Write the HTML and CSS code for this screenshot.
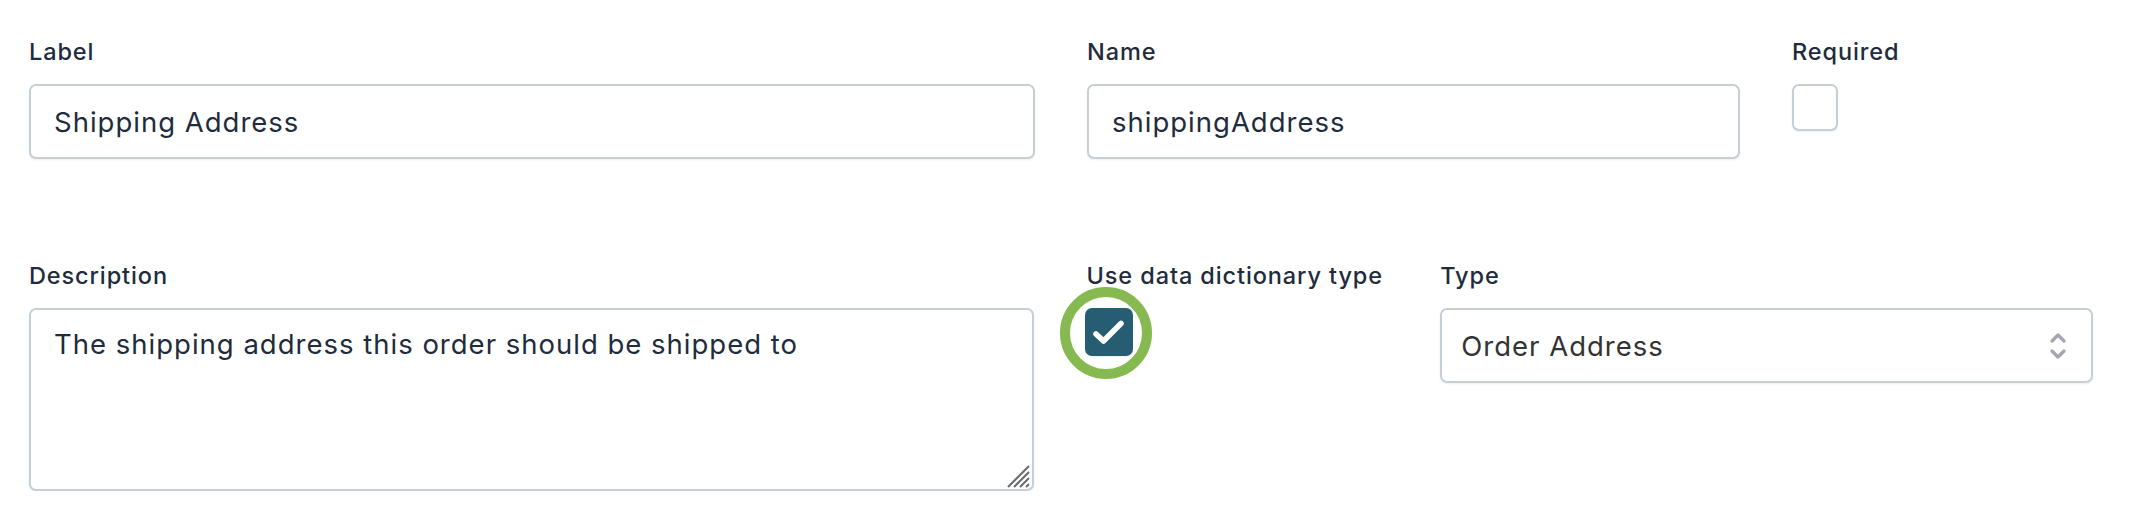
FILE: index.html
```html
<!DOCTYPE html>
<html lang="en">
<head>
<meta charset="utf-8">
<title>Field editor</title>
<link rel="stylesheet" href="styles.css">
</head>
<body>
<form class="form">
  <div class="row">
    <div class="field col-wide">
      <label class="lbl">Label</label>
      <input class="control" type="text" value="Shipping Address">
    </div>
    <div class="field col-mid">
      <label class="lbl">Name</label>
      <input class="control" type="text" value="shippingAddress">
    </div>
    <div class="field col-check">
      <label class="lbl">Required</label>
      <span class="check"></span>
    </div>
  </div>
  <div class="row">
    <div class="field col-wide">
      <label class="lbl">Description</label>
      <div class="ta-wrap">
        <textarea class="control area">The shipping address this order should be shipped to</textarea>
        <svg class="grip" width="24" height="24" viewBox="0 0 24 24">
          <path d="M2 23 L23 2 M8 23 L23 8 M14 23 L23 14 M20 23 L23 20" stroke="#6b6b6b" stroke-width="2" fill="none"/>
        </svg>
      </div>
    </div>
    <div class="field col-dict">
      <label class="lbl">Use data dictionary type</label>
      <div class="check-wrap">
        <span class="check checked">
          <svg width="48" height="48" viewBox="0 0 48 48">
            <path d="M11 26 L18.5 33 L36 15.5" stroke="#fff" stroke-width="5.5" fill="none" stroke-linecap="round" stroke-linejoin="round"/>
          </svg>
        </span>
        <span class="ring"></span>
      </div>
    </div>
    <div class="field col-mid">
      <label class="lbl">Type</label>
      <div class="select">
        <span class="select-value">Order Address</span>
        <svg class="chev" width="18" height="30" viewBox="0 0 18 30">
          <path d="M3 10 L9 4 L15 10 M3 20 L9 26 L15 20" stroke="#a3a6b1" stroke-width="3.2" fill="none" stroke-linecap="round" stroke-linejoin="round"/>
        </svg>
      </div>
    </div>
  </div>
</form>
</body>
</html>
```

FILE: styles.css
```css
* { box-sizing: border-box; }

html, body {
  margin: 0;
  background: #ffffff;
}

body {
  font-family: Inter, "Noto Sans", "DejaVu Sans", sans-serif;
  color: #1f2c3d;
}

.form {
  padding: 36px 39px 0 29px;
  display: flex;
  flex-direction: column;
  gap: 101px;
}

.row {
  display: flex;
  gap: 52px;
  align-items: flex-start;
}

.field {
  display: flex;
  flex-direction: column;
  gap: 17px;
}

.col-wide { width: 1006px; }
.col-mid { width: 653px; }
.col-check { width: 200px; }
.col-dict { width: 302px; }

.lbl {
  font-size: 23.5px;
  line-height: 31px;
  font-weight: 500;
  letter-spacing: 0.9px;
  color: #1f2c3d;
  white-space: nowrap;
}

.control {
  display: block;
  width: 100%;
  height: 75px;
  border: 2px solid #c6cfd5;
  border-radius: 7px;
  box-shadow: 0 1px 2px rgba(30, 40, 60, 0.08);
  padding: 0 23px;
  font-family: inherit;
  font-size: 27.5px;
  letter-spacing: 1px;
  color: #1f2c3d;
  background: #fff;
  outline: none;
}

.ta-wrap {
  position: relative;
  width: 100%;
}

.area {
  height: 183px;
  padding-top: 14px;
  line-height: 40px;
  resize: none;
}

.grip {
  position: absolute;
  right: 4px;
  bottom: 3px;
}

.check {
  display: block;
  width: 46px;
  height: 47px;
  border: 2px solid #c6cfd5;
  border-radius: 7px;
  background: #fff;
  box-shadow: 0 1px 2px rgba(30, 40, 60, 0.08);
}

.check-wrap {
  position: relative;
  width: 48px;
  height: 48px;
  margin-left: -1px;
}

.check.checked {
  width: 48px;
  height: 48px;
  border: none;
  background: #275d73;
}

.check.checked svg { display: block; }

.ring {
  position: absolute;
  left: -25px;
  top: -21px;
  width: 92px;
  height: 92px;
  border: 10px solid #86b94f;
  border-radius: 50%;
}

.select {
  height: 75px;
  border: 2px solid #c6cfd5;
  border-radius: 7px;
  box-shadow: 0 1px 2px rgba(30, 40, 60, 0.08);
  display: flex;
  align-items: center;
  justify-content: space-between;
  padding: 0 24px 0 19px;
}

.select-value {
  font-size: 27.5px;
  letter-spacing: 1px;
  color: #333333;
}

.chev { display: block; }
```
